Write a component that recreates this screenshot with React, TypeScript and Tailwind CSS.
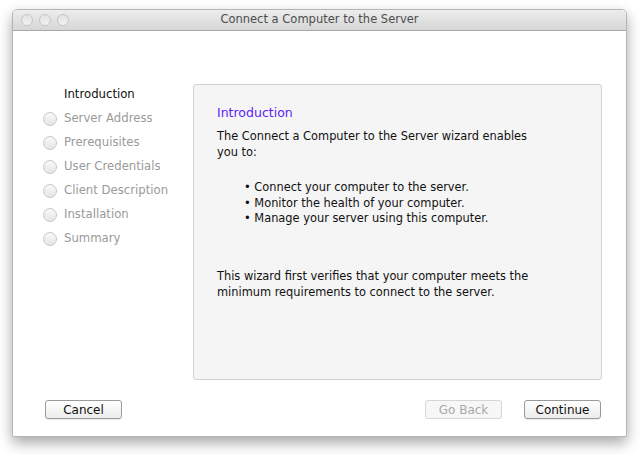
import React from "react";

const steps = [
  "Introduction",
  "Server Address",
  "Prerequisites",
  "User Credentials",
  "Client Description",
  "Installation",
  "Summary",
];

const font = { fontFamily: '"DejaVu Sans", "Liberation Sans", sans-serif' };

function Light() {
  return (
    <span className="h-[12px] w-[12px] rounded-full border border-[#c4c4c4] bg-gradient-to-b from-[#e2e2e2] to-[#f2f2f2]" />
  );
}

function Button({
  label,
  disabled,
  className = "",
}: {
  label: string;
  disabled?: boolean;
  className?: string;
}) {
  return (
    <button
      className={
        "h-[19px] w-[77px] rounded-[3px] border text-[12px] leading-none " +
        (disabled
          ? "border-[#d6d6d6] bg-[#f7f7f7] text-[#a8a8a8] "
          : "border-[#9a9a9a] bg-gradient-to-b from-white to-[#ececec] text-[#111] shadow-[0_1px_0_rgba(0,0,0,0.08)] ") +
        className
      }
    >
      {label}
    </button>
  );
}

export default function App() {
  return (
    <div className="h-[455px] w-[640px] bg-white pl-[12px] pt-[9px]" style={font}>
      <div className="flex h-[428px] w-[615px] flex-col overflow-hidden rounded-t-[5px] rounded-b-[2px] border border-[#b5b5b5] bg-white shadow-[0_6px_14px_rgba(0,0,0,0.35)]">
        <div className="relative flex h-[21px] items-center border-b border-[#a9a9a9] bg-gradient-to-b from-[#ededed] to-[#d6d6d6]">
          <div className="flex gap-[6px] pl-[8px]">
            <Light />
            <Light />
            <Light />
          </div>
          <div className="absolute inset-0 flex items-center justify-center text-[11.5px] text-[#4d4d4d]">
            Connect a Computer to the Server
          </div>
        </div>

        <div className="flex flex-1 pt-[53px]">
          <div className="-mt-[1px] w-[180px] pl-[30px]">
            {steps.map((s, i) => (
              <div key={s} className="flex h-[24px] items-center">
                {i === 0 ? (
                  <span className="w-[21px]" />
                ) : (
                  <span className="mr-[7px] h-[14px] w-[14px] rounded-full border border-[#c8c8c8] bg-gradient-to-b from-[#f8f8f8] to-[#e6e6e6]" />
                )}
                <span
                  className={
                    "text-[11.7px] " + (i === 0 ? "text-[#111]" : "text-[#9a9a9a]")
                  }
                >
                  {s}
                </span>
              </div>
            ))}
          </div>

          <div className="h-[296px] w-[409px] rounded-[3px] border border-[#d2d2d2] bg-[#f5f5f5] pl-[23px] pt-[20px] text-[11.4px] leading-[16px] text-[#111]">
            <div className="text-[12.5px] text-[#5a1ef7]">Introduction</div>
            <p className="mt-[7px] w-[320px]">
              The Connect a Computer to the Server wizard enables you to:
            </p>
            <ul className="mt-[20px] pl-[27px] leading-[15.5px]">
              <li>• Connect your computer to the server.</li>
              <li>• Monitor the health of your computer.</li>
              <li>• Manage your server using this computer.</li>
            </ul>
            <p className="mt-[41px] w-[330px]">
              This wizard first verifies that your computer meets the minimum
              requirements to connect to the server.
            </p>
          </div>
        </div>

        <div className="flex items-start pb-[17px] pl-[32px] pr-[25px]">
          <Button label="Cancel" />
          <div className="flex-1" />
          <Button label="Go Back" disabled />
          <Button label="Continue" className="ml-[22px]" />
        </div>
      </div>
    </div>
  );
}
